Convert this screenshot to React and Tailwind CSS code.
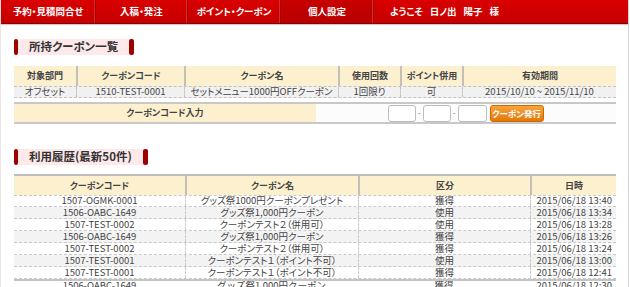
import React from "react";

const navItems = [
  { name: "予約・見積問合せ", w: "w-[95px]" },
  { name: "入稿・発注", w: "w-[92px]" },
  { name: "ポイント・クーポン", w: "w-[93px]" },
  { name: "個人設定", w: "w-[93px]", active: true },
];

const couponCols = [
  { label: "対象部門", value: "オフセット", w: "w-[62px]" },
  { label: "クーポンコード", value: "1510-TEST-0001", w: "w-[108px]" },
  { label: "クーポン名", value: "セットメニュー1000円OFFクーポン", w: "w-[154px]" },
  { label: "使用回数", value: "1回限り", w: "w-[62px]" },
  { label: "ポイント併用", value: "可", w: "w-[62px]" },
  { label: "有効期間", value: "2015/10/10 ~ 2015/11/10", w: "flex-1" },
];

const historyCols = [
  { label: "クーポンコード", w: "w-[171px]" },
  { label: "クーポン名", w: "w-[173px]" },
  { label: "区分", w: "w-[172px]" },
  { label: "日時", w: "flex-1" },
];

const history = [
  ["1507-OGMK-0001", "グッズ祭1000円クーポンプレゼント", "獲得", "2015/06/18 13:40"],
  ["1506-OABC-1649", "グッズ祭1,000円クーポン", "使用", "2015/06/18 13:34"],
  ["1507-TEST-0002", "クーポンテスト２（併用可）", "使用", "2015/06/18 13:28"],
  ["1506-OABC-1649", "グッズ祭1,000円クーポン", "獲得", "2015/06/18 13:26"],
  ["1507-TEST-0002", "クーポンテスト２（併用可）", "獲得", "2015/06/18 13:24"],
  ["1507-TEST-0001", "クーポンテスト１（ポイント不可）", "使用", "2015/06/18 13:00"],
  ["1507-TEST-0001", "クーポンテスト１（ポイント不可）", "獲得", "2015/06/18 12:41"],
];

function SectionTitle({ children }) {
  return (
    <div className="flex h-[16px] w-fit">
      <div className="w-[4px] rounded-[2px] bg-[#9a0000]" />
      <div className="flex items-center bg-[#fde9e9] px-[11px] text-[11.5px] font-bold leading-none text-[#333] [font-feature-settings:'palt']">
        {children}
      </div>
      <div className="w-[5px] rounded-[2px] bg-[#9a0000]" />
    </div>
  );
}

export default function App() {
  return (
    <div className="h-[287px] w-[630px] overflow-hidden bg-white font-['Noto_Sans_CJK_JP',sans-serif] text-[#333]">
      <div className="min-h-[287px] w-[629px] border-r border-l border-r-[#d6d6d6] border-l-[#f1e6e6]">
        {/* Top navigation */}
        <header className="flex h-[24px] border-b border-[#8c0000] bg-gradient-to-b from-[#d90000] to-[#c60000] shadow-[0_1px_1px_rgba(0,0,0,0.2)]">
          {navItems.map((item) => (
            <div
              key={item.name}
              className={`${item.w} flex items-center justify-center border-r border-[#a30000] shadow-[inset_-1px_0_0_#dd2a2a] text-[9.5px] font-bold text-white [font-feature-settings:'palt'] ${
                item.active ? "bg-gradient-to-b from-[#c80000] to-[#b80000]" : ""
              }`}
            >
              {item.name}
            </div>
          ))}
          <div className="flex items-center gap-[7px] pl-[16px] text-[9.5px] font-bold text-white [font-feature-settings:'palt']">
            <span>ようこそ</span>
            <span>日ノ出</span>
            <span>陽子</span>
            <span>様</span>
          </div>
        </header>

        <main className="pl-[13px] pr-[12px]">
          {/* Coupons */}
          <div className="mt-[15px]">
            <SectionTitle>所持クーポン一覧</SectionTitle>
          </div>

          <div className="mt-[11px]">
            <div className="flex h-[20px] bg-[#fdf0cf]">
              {couponCols.map((c, i) => (
                <div
                  key={c.label}
                  className={`${c.w} flex items-center justify-center text-[9px] font-bold text-[#444] [font-feature-settings:'palt'] ${
                    i > 0 ? "border-l-2 border-[#c4c0b8]" : ""
                  }`}
                >
                  {c.label}
                </div>
              ))}
            </div>
            <div className="flex h-[12px] border-t border-b border-dashed border-[#c2c2c2] bg-[#f1f1f1]">
              {couponCols.map((c, i) => (
                <div
                  key={c.label}
                  className={`${c.w} flex items-center justify-center text-[9.5px] leading-none text-[#444] [font-feature-settings:'palt'] ${
                    i > 0 ? "border-l border-dashed border-[#c2c2c2]" : ""
                  }`}
                >
                  {c.value}
                </div>
              ))}
            </div>

            <div className="mt-[4px] flex h-[22px] border-t-2 border-b-2 border-[#c8c8c8]">
              <div className="flex w-[302px] items-center justify-center bg-[#fdf0cf] text-[9px] font-bold text-[#444] [font-feature-settings:'palt']">
                クーポンコード入力
              </div>
              <div className="flex flex-1 items-center bg-[#fcfcfc] pl-[72px]">
                <input className="h-[17px] w-[28px] rounded-[3px] border border-[#bdbdbd] bg-white" />
                <span className="mx-[2px] text-[8px] text-[#666]">-</span>
                <input className="h-[17px] w-[28px] rounded-[3px] border border-[#bdbdbd] bg-white" />
                <span className="mx-[2px] text-[8px] text-[#666]">-</span>
                <input className="h-[17px] w-[29px] rounded-[3px] border border-[#bdbdbd] bg-white" />
                <button className="ml-[3px] flex h-[17px] w-[54px] items-center justify-center rounded-[3px] border border-[#cf6a00] bg-gradient-to-b from-[#f7a43a] to-[#e27800] text-[8.5px] font-bold text-white [font-feature-settings:'palt']">
                  クーポン発行
                </button>
              </div>
            </div>
          </div>

          {/* History */}
          <div className="mt-[25px]">
            <SectionTitle>利用履歴(最新50件)</SectionTitle>
          </div>

          <div className="mt-[9px]">
            <div className="flex h-[21px] border-t-2 border-[#bdbdbd] bg-[#fdf0cf]">
              {historyCols.map((c, i) => (
                <div
                  key={c.label}
                  className={`${c.w} flex items-center justify-center text-[9px] font-bold text-[#444] [font-feature-settings:'palt'] ${
                    i > 0 ? "border-l-2 border-[#c4c0b8]" : ""
                  }`}
                >
                  {c.label}
                </div>
              ))}
            </div>
            {history.map((row, r) => (
              <div
                key={r}
                className={`flex h-[12px] border-b border-dashed border-[#c8c8c8] ${
                  r % 2 === 1 ? "bg-[#f3f3f3]" : "bg-white"
                } ${r === 0 ? "border-t" : ""}`}
              >
                {row.map((cell, i) => (
                  <div
                    key={i}
                    className={`${historyCols[i].w} flex items-center text-[9.5px] leading-none text-[#444] [font-feature-settings:'palt'] ${
                      i === 3 ? "justify-end pr-[4px]" : "justify-center"
                    } ${i > 0 ? "border-l border-dashed border-[#c8c8c8]" : ""}`}
                  >
                    {cell}
                  </div>
                ))}
              </div>
            ))}
            <div className="flex h-[12px] border-t-2 border-[#c4c4c4] bg-white">
              {["1506-OABC-1649", "グッズ祭1,000円クーポン", "獲得", "2015/06/18 12:30"].map((cell, i) => (
                <div
                  key={i}
                  className={`${historyCols[i].w} flex items-center text-[9.5px] leading-none text-[#444] ${
                    i === 3 ? "justify-end pr-[4px]" : "justify-center"
                  }`}
                >
                  {cell}
                </div>
              ))}
            </div>
          </div>
        </main>
      </div>
    </div>
  );
}
